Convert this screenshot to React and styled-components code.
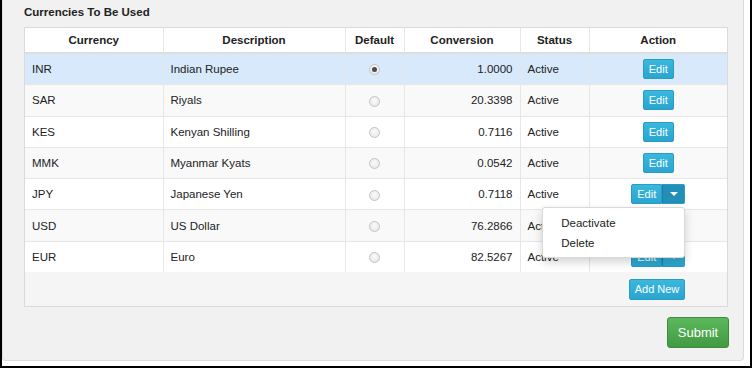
import React from "react";
import styled, { createGlobalStyle } from "styled-components";

const GlobalStyle = createGlobalStyle`
  html, body {
    margin: 0;
    padding: 0;
    background: #fff;
  }
  body {
    font-family: "Liberation Sans", Arial, sans-serif;
    color: #333;
  }
`;

const currencies = [
  { code: "INR", name: "Indian Rupee", rate: "1.0000", isDefault: true },
  { code: "SAR", name: "Riyals", rate: "20.3398" },
  { code: "KES", name: "Kenyan Shilling", rate: "0.7116" },
  { code: "MMK", name: "Myanmar Kyats", rate: "0.0542" },
  { code: "JPY", name: "Japanese Yen", rate: "0.7118", split: true, open: true },
  { code: "USD", name: "US Dollar", rate: "76.2866", split: true },
  { code: "EUR", name: "Euro", rate: "82.5267", split: true }
];

const Frame = styled.div`
  box-sizing: border-box;
  width: 752px;
  height: 368px;
  border-left: 2px solid #000;
  border-right: 2px solid #000;
  border-bottom: 2px solid #000;
  padding: 0 6px 5px 0;
`;

const Panel = styled.div`
  box-sizing: border-box;
  height: 100%;
  background: #f1f1f1;
  border: 1px solid #dcdcdc;
  border-top: none;
  border-radius: 0 0 4px 4px;
  padding: 5px 15px 0 21px;
  display: flex;
  flex-direction: column;
`;

const Title = styled.h4`
  margin: 0 0 8px;
  font-size: 11.5px;
  line-height: 14px;
  font-weight: bold;
  color: #222;
`;

const TableBox = styled.div`
  border: 1px solid #dadada;
  background: #f5f5f5;
`;

const Table = styled.table`
  width: 100%;
  border-collapse: collapse;
  table-layout: fixed;
  font-size: 11.5px;
`;

const Th = styled.th`
  height: 24px;
  padding: 0 7px;
  background: #fff;
  font-weight: bold;
  text-align: center;
  color: #222;
  border-bottom: 2px solid #dedede;
  border-left: 1px solid #e6e6e6;
  &:first-child {
    border-left: none;
  }
`;

const Row = styled.tr`
  background: ${p => (p.$selected ? "#d7e9fb" : p.$striped ? "#f9f9f9" : "#fff")};
`;

const Td = styled.td`
  height: 30.3px;
  padding: 0 7px;
  vertical-align: middle;
  text-align: ${p => p.$align || "left"};
  color: #222;
  border-top: 1px solid #e6e6e6;
  border-left: 1px solid #e6e6e6;
  white-space: nowrap;
  &:first-child {
    border-left: none;
  }
`;

const Radio = styled.span`
  display: inline-block;
  box-sizing: border-box;
  width: 11px;
  height: 11px;
  border-radius: 50%;
  border: 1px solid #c4c4c4;
  background: radial-gradient(circle at 50% 40%, #fafafa, #e4e4e4);
  vertical-align: middle;
  position: relative;
  &::after {
    content: "";
    display: ${p => (p.$checked ? "block" : "none")};
    position: absolute;
    left: 2px;
    top: 2px;
    width: 5px;
    height: 5px;
    border-radius: 50%;
    background: #4a4a4a;
  }
`;

const Button = styled.button`
  font-family: "Liberation Sans", Arial, sans-serif;
  font-size: 11px;
  line-height: 16px;
  color: #fff;
  padding: 1px 5px;
  border: 1px solid #2a9cc2;
  border-radius: 2px;
  background: linear-gradient(#3bb8de, #2aa5cf);
  cursor: pointer;
`;

const Group = styled.div`
  display: inline-flex;
  position: relative;
  vertical-align: middle;
`;

const GroupMain = styled(Button)`
  border-radius: 2px 0 0 2px;
`;

const Caret = styled(Button)`
  width: 23px;
  padding: 0;
  border-left: 1px solid #1c7ea3;
  border-radius: 0 2px 2px 0;
  background: ${p => (p.$active ? "#218fb7" : "linear-gradient(#3bb8de, #2aa5cf)")};
  display: flex;
  align-items: center;
  justify-content: center;
  &::after {
    content: "";
    border-left: 4px solid transparent;
    border-right: 4px solid transparent;
    border-top: 4px solid #fff;
  }
`;

const Menu = styled.ul`
  position: absolute;
  top: calc(100% + 3px);
  right: 0;
  z-index: 5;
  width: 143px;
  box-sizing: border-box;
  margin: 0;
  padding: 5px 0 4px;
  list-style: none;
  background: #fff;
  border: 1px solid #d8d8d8;
  border-radius: 3px;
  box-shadow: 0 4px 10px rgba(0, 0, 0, 0.18);
  text-align: left;
`;

const MenuItem = styled.li`
  padding: 0 18px;
  line-height: 20px;
  font-size: 11.5px;
  color: #222;
`;

const FooterRow = styled.div`
  height: 34px;
  display: grid;
  grid-template-columns: 1fr 140px;
  align-items: center;
  justify-items: center;
`;

const AddButton = styled(Button)`
  padding: 1px 5px 2px;
`;

const Actions = styled.div`
  margin-top: 10px;
  display: flex;
  justify-content: flex-end;
  margin-right: -1px;
`;

const SubmitButton = styled.button`
  font-family: "Liberation Sans", Arial, sans-serif;
  font-size: 13px;
  color: #fff;
  width: 62px;
  height: 31px;
  border: 1px solid #3b8d3b;
  border-radius: 3px;
  background: linear-gradient(#5cb85c, #429a42);
  cursor: pointer;
`;

const ActionCell = ({ row }) => {
  if (!row.split) return <Button>Edit</Button>;
  return (
    <Group>
      <GroupMain>Edit</GroupMain>
      <Caret $active={row.open} aria-label="More" />
      {row.open && (
        <Menu>
          <MenuItem>Deactivate</MenuItem>
          <MenuItem>Delete</MenuItem>
        </Menu>
      )}
    </Group>
  );
};

const App = () => (
  <>
    <GlobalStyle />
    <Frame>
      <Panel>
        <Title>Currencies To Be Used</Title>
        <TableBox>
          <Table>
            <colgroup>
              <col style={{ width: 138 }} />
              <col style={{ width: 182 }} />
              <col style={{ width: 59 }} />
              <col style={{ width: 116 }} />
              <col style={{ width: 69 }} />
              <col style={{ width: 138 }} />
            </colgroup>
            <thead>
              <tr>
                <Th>Currency</Th>
                <Th>Description</Th>
                <Th>Default</Th>
                <Th>Conversion</Th>
                <Th>Status</Th>
                <Th>Action</Th>
              </tr>
            </thead>
            <tbody>
              {currencies.map((row, i) => (
                <Row key={row.code} $selected={row.isDefault} $striped={i % 2 === 1}>
                  <Td>{row.code}</Td>
                  <Td>{row.name}</Td>
                  <Td $align="center">
                    <Radio $checked={row.isDefault} />
                  </Td>
                  <Td $align="right">{row.rate}</Td>
                  <Td>Active</Td>
                  <Td $align="center">
                    <ActionCell row={row} />
                  </Td>
                </Row>
              ))}
            </tbody>
          </Table>
          <FooterRow>
            <span />
            <AddButton>Add New</AddButton>
          </FooterRow>
        </TableBox>
        <Actions>
          <SubmitButton>Submit</SubmitButton>
        </Actions>
      </Panel>
    </Frame>
  </>
);

export default App;
